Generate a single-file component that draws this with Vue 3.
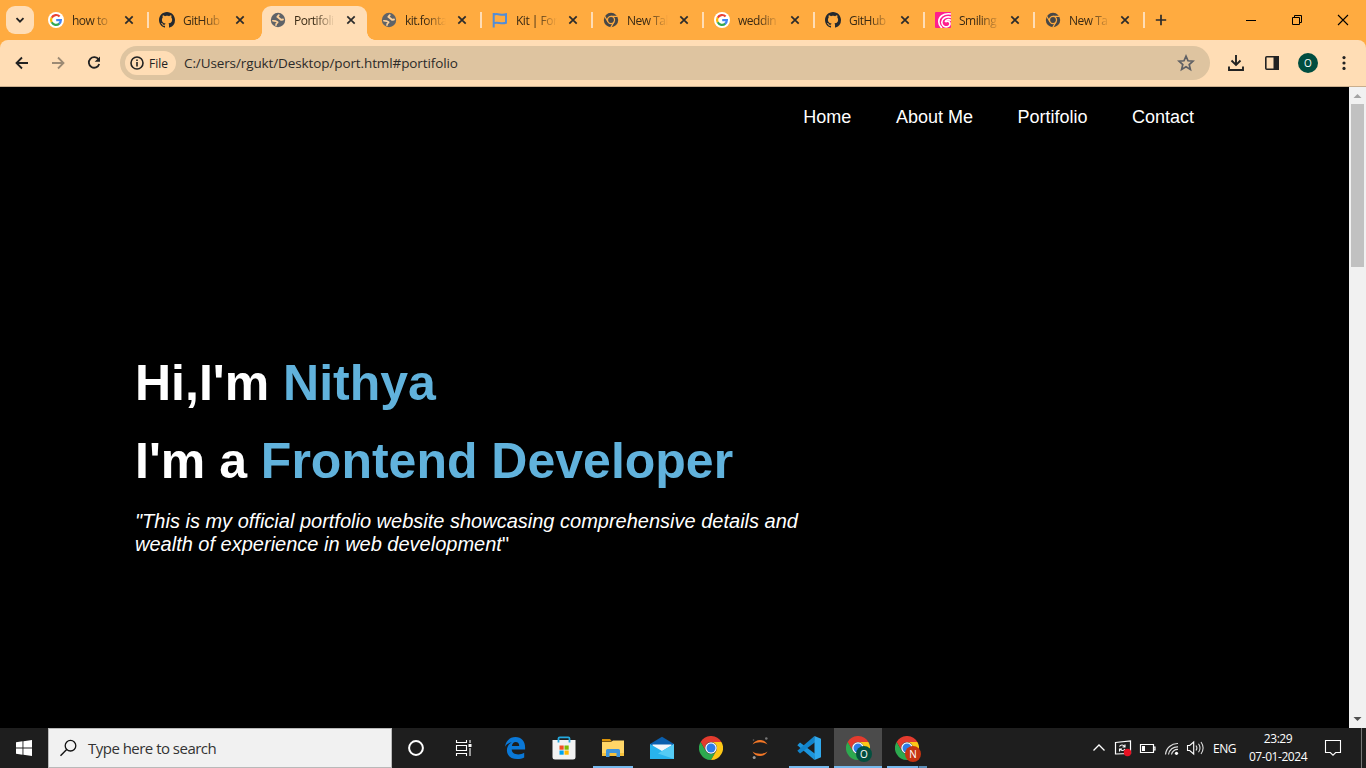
<script setup>
const tabs = [
  { title: 'how to', icon: 'google', sep: true },
  { title: 'GitHub', icon: 'github' },
  { title: 'Portifoli', icon: 'globe', active: true },
  { title: 'kit.fonta', icon: 'globe', sep: true },
  { title: 'Kit | For', icon: 'flag', sep: true },
  { title: 'New Tal', icon: 'chrome-gray', sep: true },
  { title: 'weddin', icon: 'google', sep: true },
  { title: 'GitHub', icon: 'github', sep: true, narrow: true },
  { title: 'Smiling', icon: 'swirl', sep: true, narrow: true },
  { title: 'New Ta', icon: 'chrome-gray', sep: true, narrow: true },
]
const links = ['Home', 'About Me', 'Portifolio', 'Contact']
const apps = [
  { icon: 'edge' },
  { icon: 'store' },
  { icon: 'explorer', open: true },
  { icon: 'mail' },
  { icon: 'chrome' },
  { icon: 'jupyter' },
  { icon: 'vscode', open: true },
  { icon: 'chrome', open: true, current: true, badge: 'O', tone: 'green' },
  { icon: 'chrome', open: true, stacked: true, badge: 'N', tone: 'red' },
]
</script>

<template>
  <div class="screen">
    <svg class="defs" aria-hidden="true">
      <symbol id="google" viewBox="0 0 16 16">
        <circle cx="8" cy="8" r="8" fill="#fff" />
        <g fill="none" stroke-width="2.2">
          <path d="M11.6 4.5A4.9 4.9 0 0 0 3.7 5.7" stroke="#ea4335" />
          <path d="M3.7 5.6a4.9 4.9 0 0 0 0 4.8" stroke="#fbbc05" />
          <path d="M3.7 10.3a4.9 4.9 0 0 0 7.6 1.3" stroke="#34a853" />
          <path d="M11.1 11.8A4.8 4.8 0 0 0 12.9 8.1H8.2" stroke="#4285f4" />
        </g>
      </symbol>
      <symbol id="github" viewBox="0 0 16 16">
        <path fill="#24292f" d="M8 0C3.58 0 0 3.58 0 8c0 3.54 2.29 6.53 5.47 7.59.4.07.55-.17.55-.38 0-.19-.01-.82-.01-1.49-2.01.37-2.53-.49-2.69-.94-.09-.23-.48-.94-.82-1.13-.28-.15-.68-.52-.01-.53.63-.01 1.08.58 1.23.82.72 1.21 1.87.87 2.33.66.07-.52.28-.87.51-1.07-1.78-.2-3.64-.89-3.64-3.95 0-.87.31-1.59.82-2.15-.08-.2-.36-1.02.08-2.12 0 0 .67-.21 2.2.82.64-.18 1.32-.27 2-.27s1.36.09 2 .27c1.53-1.04 2.2-.82 2.2-.82.44 1.1.16 1.92.08 2.12.51.56.82 1.27.82 2.15 0 3.07-1.87 3.75-3.65 3.95.29.25.54.73.54 1.48 0 1.07-.01 1.93-.01 2.2 0 .21.15.46.55.38A8 8 0 0 0 16 8c0-4.42-3.58-8-8-8z" />
      </symbol>
      <symbol id="globe" viewBox="0 0 16 16">
        <circle cx="8" cy="8" r="7.2" fill="#5f6368" />
        <g fill="none" stroke="#ffd29b" stroke-linecap="round" stroke-linejoin="round">
          <path d="M8.800 3.200L7.300 4.800l2.200 1.700 1.500 1.300 2-.3" stroke-width="1.800" />
          <path d="M2.800 8.700l3 .4 1.900 1.200-1.400 1.300-.3 1.500" stroke-width="1.600" />
        </g>
      </symbol>
      <symbol id="flag" viewBox="0 0 16 16">
        <path d="M1.700 1v14.500M1.700 2.600c4.500-2 6.800 1.600 12.300-.3v8.500c-5.500 2-7.800-1.600-12.300.4" fill="none" stroke="#528dd7" stroke-width="2" />
      </symbol>
      <symbol id="chrome-gray" viewBox="0 0 24 24">
        <circle cx="12" cy="12" r="10.800" fill="#474747" />
        <g fill="none" stroke="#ffab40" stroke-width="1.900">
          <circle cx="12" cy="12" r="5.300" />
          <path d="M12 6.700h10M7.400 14.700L2.300 6M16.600 14.700L11.500 23.500" />
        </g>
      </symbol>
      <symbol id="swirl" viewBox="0 0 16 16">
        <rect width="16" height="16" rx="1" fill="#ff1e8e" />
        <g fill="none" stroke="#fff" stroke-width="1.600">
          <path d="M16 2C8 .8 3.600 5.200 3.800 10c.1 2.500 1.200 4.500 3.200 6" />
          <path d="M16 5.200C10.500 4 6.600 6.800 6.800 10.500c.2 3.200 3 4.800 5.500 4.300 2.500-.5 3.300-3 2.200-4.600-1-1.400-3.300-1.300-3.800.1" />
          <path d="M16 8.300c-2.500-1.300-5.300-.6-5.800 1.700" />
        </g>
      </symbol>
      <symbol id="chrome" viewBox="0 0 24 24">
        <path fill="#e33b2e" d="M12 6H22.400A12 12 0 0 0 1.600 6L6.800 15A6 6 0 0 1 12 6z" />
        <path fill="#2da94f" d="M6.800 15L1.600 6A12 12 0 0 0 12 24L17.200 15A6 6 0 0 1 6.800 15z" />
        <path fill="#fdc716" d="M17.200 15L12 24A12 12 0 0 0 22.400 6H12A6 6 0 0 1 17.200 15z" />
        <circle cx="12" cy="12" r="5.800" fill="#fff" />
        <circle cx="12" cy="12" r="4.500" fill="#2d7de9" />
      </symbol>
      <symbol id="edge" viewBox="0 0 24 24">
        <path fill="#0a78d7" d="M2 10.700C2.900 5 6.900 1.100 12.500 1.100c6 0 9.600 4.300 9.600 10.300v2.200H8.700c.2 3.300 3 4.900 6.500 4.900 2.200 0 4.200-.6 6-1.700v4.600c-2 1.100-4.400 1.600-7 1.600-6.200 0-10.300-3.200-10.300-8.700 0-3.600 2-6.400 5-8-3.300.4-5.600 2.100-6.900 4.400zM8.900 9.900h7.300c0-2.500-1.200-3.900-3.500-3.900-2 0-3.400 1.400-3.800 3.900z" />
      </symbol>
      <symbol id="store" viewBox="0 0 24 24">
        <path d="M.5 4h23v17a2.500 2.500 0 0 1-2.500 2.500H3A2.500 2.500 0 0 1 .5 21z" fill="#f2f2f2" />
        <path d="M6.500 6.500v-4a1.200 1.200 0 0 1 1.200-1.200h8.600a1.200 1.200 0 0 1 1.200 1.200v4" fill="none" stroke="#23a9df" stroke-width="1.800" />
        <path d="M7.500 9.500h4.200v4.200H7.500z" fill="#f25022" /><path d="M12.500 9.500h4.200v4.200h-4.200z" fill="#7fba00" />
        <path d="M7.500 14.500h4.200v4.200H7.500z" fill="#00a4ef" /><path d="M12.500 14.500h4.200v4.200h-4.200z" fill="#ffb900" />
      </symbol>
      <symbol id="explorer" viewBox="0 0 24 24">
        <path d="M1 3h8l2 2.500H1z" fill="#d99208" />
        <path d="M1 6h9l2-1.500h11V20H1z" fill="#ffd667" />
        <path d="M1 17h22v3H1z" fill="#f5c13c" />
        <path d="M5 21v-6.500a1.500 1.500 0 0 1 1.500-1.500h11a1.500 1.500 0 0 1 1.500 1.500V21h-3.500v-4h-7v4z" fill="#3e95dc" />
      </symbol>
      <symbol id="mail" viewBox="0 0 24 24">
        <path d="M0 8L12 .8 24 8v3H0z" fill="#0a5fae" />
        <path d="M2.500 8.500h19v7h-19z" fill="#f3f7fb" />
        <path d="M0 8l12 7L24 8v15H0z" fill="#28b3ed" />
        <path d="M24 8v15L8 17.500z" fill="#55ccf5" />
      </symbol>
      <symbol id="jupyter" viewBox="0 0 24 24">
        <path d="M4.500 8.500C7.500 2.500 16.500 2.500 19.500 8.500 15.500 5.500 8.500 5.500 4.500 8.500zM4.500 15.500c3 6 12 6 15 0-4 3-11 3-15 0z" fill="#f37726" />
        <circle cx="18.300" cy="2.500" r="1.300" fill="#777" /><circle cx="6.200" cy="21.500" r="1.500" fill="#999" /><circle cx="5.500" cy="4" r=".8" fill="#666" />
      </symbol>
      <symbol id="vscode" viewBox="0 0 24 24">
        <path d="M17.500 24L.3 9.200 3 6.500 18 17.800z" fill="#1c95dc" />
        <path d="M17.500 0L.3 14.800l2.700 2.700L18 6.200z" fill="#1284cb" />
        <path d="M17.500 0L24 2.700v18.600L17.500 24z" fill="#30a9ed" />
      </symbol>
    </svg>

    <header class="strip">
      <button class="search-tabs">
        <svg width="10" height="10" viewBox="0 0 10 10"><path d="M1.500 3.200L5 6.700l3.500-3.500" fill="none" stroke="#222" stroke-width="1.800" /></svg>
      </button>
      <div class="tabs">
        <div v-for="(t, i) in tabs" :key="i" class="tab" :class="{ active: t.active, narrow: t.narrow, sep: t.sep }">
          <svg class="fav" width="16" height="16"><use :href="'#' + t.icon" /></svg>
          <span class="title">{{ t.title }}</span>
          <svg class="close" width="16" height="16" viewBox="0 0 16 16"><path d="M4.300 4.300l7.400 7.400M11.700 4.300l-7.400 7.400" stroke="#2b2b2b" stroke-width="1.700" /></svg>
        </div>
      </div>
      <svg class="plus" width="12" height="12" viewBox="0 0 12 12"><path d="M6 .8v10.400M.8 6h10.400" stroke="#2b2b2b" stroke-width="1.700" /></svg>
      <div class="window-buttons">
        <svg width="46" height="40" viewBox="0 0 46 40"><path d="M18 20.500h10" stroke="#000" /></svg>
        <svg width="46" height="40" viewBox="0 0 46 40"><path d="M18.500 17.500h7v7h-7zM20.500 17.500v-2h7v7h-2" fill="none" stroke="#000" /></svg>
        <svg width="46" height="40" viewBox="0 0 46 40"><path d="M18 15l10 10M28 15L18 25" stroke="#000" stroke-width="1.100" /></svg>
      </div>
    </header>

    <div class="toolbar-bg">
      <div class="toolbar">
        <svg class="tool" viewBox="0 0 36 36"><path d="M28 18H17M22 12.500L16.500 18l5.500 5.500" fill="none" stroke="#222" stroke-width="1.800" /></svg>
        <svg class="tool" viewBox="0 0 36 36"><path d="M16 18h11M22 12.500l5.500 5.500-5.500 5.500" fill="none" stroke="#9c8a74" stroke-width="1.800" /></svg>
        <svg class="tool" viewBox="0 0 36 36"><path d="M26.600 14.600A5.300 5.300 0 1 0 27.200 19" fill="none" stroke="#222" stroke-width="1.800" /><path d="M28 11.500v5.300h-5.300z" fill="#222" /></svg>
        <div class="address">
          <div class="chip">
            <svg width="14" height="14" viewBox="0 0 14 14"><circle cx="7" cy="7" r="6" fill="none" stroke="#222" stroke-width="1.600" /><path d="M7 6v4.500M7 3.500v1.600" stroke="#222" stroke-width="1.600" /></svg>
            <span>File</span>
          </div>
          <span class="url">C:/Users/rgukt/Desktop/port.html#portifolio</span>
          <svg class="star" width="18" height="18" viewBox="0 0 18 18"><path d="M9 2.200l2 4.600 5 .4-3.800 3.300 1.200 4.900L9 12.800l-4.400 2.600 1.200-4.900L2 7.200l5-.4z" fill="none" stroke="#5f6064" stroke-width="1.700" /></svg>
        </div>
        <div class="actions">
          <svg class="tool" viewBox="0 0 36 36"><path d="M18 10v9.500M13.500 15.500L18 20l4.500-4.500M11 21.500V25h14v-3.500" fill="none" stroke="#222" stroke-width="1.900" /></svg>
          <svg class="tool" viewBox="0 0 36 36"><rect x="11.800" y="11.800" width="12.400" height="12.400" rx="1" fill="none" stroke="#222" stroke-width="1.600" /><path d="M19.500 11H25v14h-5.500z" fill="#222" /></svg>
          <div class="avatar-slot"><span class="avatar">O</span></div>
          <svg class="tool" viewBox="0 0 36 36"><g fill="#222"><circle cx="18" cy="12.600" r="1.600" /><circle cx="18" cy="18" r="1.600" /><circle cx="18" cy="23.400" r="1.600" /></g></svg>
        </div>
      </div>
    </div>

    <main class="viewport">
      <div class="page">
        <nav><a v-for="l in links" :key="l">{{ l }}</a></nav>
        <section class="hero">
          <h1>Hi,I'm <b>Nithya</b></h1>
          <h1>I'm a <b>Frontend Developer</b></h1>
          <p><i>"This is my official portfolio website showcasing comprehensive details and<br>wealth of experience in web development</i>"</p>
        </section>
      </div>
      <div class="scrollbar">
        <svg width="17" height="17" viewBox="0 0 17 17"><path d="M4.500 11L8.500 7l4 4z" fill="#a3a3a3" /></svg>
        <div class="thumb"></div>
        <svg class="down" width="17" height="17" viewBox="0 0 17 17"><path d="M4.500 6l4 4 4-4z" fill="#505050" /></svg>
      </div>
    </main>

    <footer class="taskbar">
      <div class="start">
        <svg width="16" height="16" viewBox="0 0 16 16"><path fill="#fff" d="M0 2.200L6.500 1.300V7.500H0zM7.400 1.200L16 0v7.500H7.400zM0 8.400h6.500v6.300L0 13.800zM7.400 8.400H16V16l-8.600-1.200z" /></svg>
      </div>
      <div class="search">
        <svg width="18" height="18" viewBox="0 0 18 18"><circle cx="11.500" cy="6.700" r="5.300" fill="none" stroke="#111" stroke-width="1.300" /><path d="M7.700 10.500L1.500 16.700" stroke="#111" stroke-width="1.400" /></svg>
        <span>Type here to search</span>
      </div>
      <div class="sys"><svg width="18" height="18" viewBox="0 0 18 18"><circle cx="9" cy="9" r="6.900" fill="none" stroke="#fff" stroke-width="2" /></svg></div>
      <div class="sys"><svg width="18" height="18" viewBox="0 0 18 18"><path d="M1.500 1v2.500h10V1M1.500 17v-2.500h10V17M1.500 6.500h10v5h-10zM15 1v3M15 9v8" fill="none" stroke="#fff" stroke-width="1.100" /><path d="M13.500 5h3v3h-3z" fill="#fff" /></svg></div>
      <div class="apps">
        <div v-for="(a, i) in apps" :key="i" class="app" :class="{ open: a.open, current: a.current, stacked: a.stacked }">
          <svg width="24" height="24"><use :href="'#' + a.icon" /></svg>
          <span v-if="a.badge" class="badge" :class="a.tone">{{ a.badge }}</span>
        </div>
      </div>
      <div class="tray">
        <svg width="24" height="40" viewBox="0 0 24 40"><path d="M6.500 22.500L12 17l5.500 5.500" fill="none" stroke="#fff" stroke-width="1.300" /></svg>
        <svg width="24" height="40" viewBox="0 0 24 40"><path d="M4.500 14.500L19.500 13v12.500L4.500 26z" fill="none" stroke="#fff" stroke-width="1.200" /><path d="M8.500 18.500c1-2 4-2 5 0m.5-2v2.500h-2.500M14 21c-1 2-4 2-5 0m-.5 2.500V21H11" fill="none" stroke="#fff" stroke-width="1.100" /><circle cx="16.500" cy="24.500" r="3.700" fill="#e81123" /></svg>
        <svg width="25" height="40" viewBox="0 0 25 40"><path d="M5.500 16.500h13v8h-13zM18.500 19h1.500v3h-1.500" fill="none" stroke="#fff" stroke-width="1.200" /><path d="M7 18h3v5H7z" fill="#fff" /></svg>
        <svg width="24" height="40" viewBox="0 0 24 40"><g fill="none" stroke="#ddd" stroke-width="1.200"><path d="M5.500 26.500A12 12 0 0 1 18 15.500M8.500 26.500a9 9 0 0 1 9.500-7.700M11.500 26.500a6 6 0 0 1 6.500-5" /></g><circle cx="16.500" cy="25.300" r="1.600" fill="#fff" /></svg>
        <svg width="24" height="40" viewBox="0 0 24 40"><path d="M3.500 17.500h2.200l4-3.500v12l-4-3.500H3.500z" fill="none" stroke="#fff" stroke-width="1.100" /><path d="M12 17.500q1.800 2.500 0 5M14.500 15.700q3 4.300 0 8.600M17 14q4.200 6 0 12" fill="none" stroke="#ddd" stroke-width="1.100" /></svg>
        <span class="lang">ENG</span>
        <div class="clock"><span>23:29</span><span>07-01-2024</span></div>
        <svg class="note" width="18" height="18" viewBox="0 0 18 18"><path d="M1.500 1.500h15v12h-4.800L9 16.200l-2.700-2.700H1.500z" fill="none" stroke="#fff" stroke-width="1.100" /></svg>
        <div class="desktop"></div>
      </div>
    </footer>
  </div>
</template>

<style>
body { overflow: hidden; }
</style>

<style scoped>
.screen { width: 1366px; height: 768px; display: flex; flex-direction: column; overflow: hidden; background: #000; font-family: "Open Sans", "Noto Sans", sans-serif; }
.screen svg { display: block; flex: none; }
.screen .defs { position: absolute; width: 0; height: 0; }

.strip { height: 40px; display: flex; align-items: center; background: #ffab40; }
.search-tabs { width: 28px; height: 28px; margin-left: 6px; padding: 0; border: 0; border-radius: 9px; background: #ffddb5; display: flex; align-items: center; justify-content: center; }
.tabs { display: flex; height: 40px; margin-left: 3px; }
.tab { position: relative; box-sizing: border-box; width: 111px; height: 40px; padding: 0 11px; display: flex; align-items: center; }
.tab.narrow { width: 110px; }
.tab.sep::after { content: ""; position: absolute; right: -1px; top: 12px; width: 2px; height: 16px; background: #ffddb5; }
.fav, .title, .close { position: relative; }
.title { width: 41px; margin-left: 8px; padding-top: 2px; overflow: hidden; white-space: nowrap; font-size: 12px; line-height: 18px; color: #3a2a14; letter-spacing: -0.5px; -webkit-mask-image: linear-gradient(90deg, #000 50%, transparent 100%); mask-image: linear-gradient(90deg, #000 50%, transparent 100%); }
.close { margin-left: auto; }
.tab.active::before { content: ""; position: absolute; left: -5px; right: -5px; top: 6px; bottom: 0; background:
  radial-gradient(circle at 0 0, transparent 7.500px, #ffddb5 8px) left bottom / 8px 8px no-repeat,
  radial-gradient(circle at 100% 0, transparent 7.500px, #ffddb5 8px) right bottom / 8px 8px no-repeat; }
.tab.active::after { content: ""; position: absolute; left: 3px; right: 3px; top: 6px; bottom: 0; border-radius: 9px 9px 0 0; background: #ffddb5; }
.tab.active .fav, .tab.active .title, .tab.active .close { z-index: 1; }
.plus { margin-left: 11px; }
.window-buttons { display: flex; margin-left: auto; }

.toolbar-bg { height: 47px; background: #ffab40; }
.toolbar { box-sizing: border-box; height: 47px; display: flex; align-items: center; background: #ffddb5; border-bottom: 1px solid #c9ae8d; border-radius: 8px 8px 0 0; }
.tool { width: 36px; height: 36px; }
.address { box-sizing: border-box; width: 1090px; height: 34px; margin-left: 12px; padding: 0 15px 0 5px; border-radius: 17px; background: #dec4a0; display: flex; align-items: center; }
.chip { box-sizing: border-box; width: 51px; height: 24px; padding-left: 5px; border-radius: 12px; background: #ffddb5; display: flex; align-items: center; gap: 5px; font-size: 12px; font-weight: 500; color: #222; }
.url { margin-left: 8px; font-size: 13.500px; line-height: 20px; color: #2c2a28; letter-spacing: -0.11px; white-space: nowrap; }
.star { margin-left: auto; }
.actions { display: flex; margin-left: 8px; align-items: center; }
.avatar-slot { width: 36px; display: flex; justify-content: center; }
.avatar { width: 20px; height: 20px; border-radius: 50%; background: #004d40; color: #fff; font-size: 10px; line-height: 20px; text-align: center; }

.viewport { height: 641px; display: flex; background: #000; }
.page { width: 1349px; font-family: "Liberation Sans", Arial, sans-serif; color: #fff; }
nav { display: flex; gap: 44.500px; justify-content: flex-end; padding: 20px 155px 0 0; font-size: 18px; line-height: 21px; }
.hero { padding: 226px 0 0 135px; }
h1 { margin: 0; font-size: 50px; line-height: 58px; height: 78px; font-weight: 700; white-space: nowrap; }
h1 b { color: #61b2dc; }
p { margin: 0; font-size: 20px; line-height: 23px; white-space: nowrap; }
.scrollbar { width: 17px; display: flex; flex-direction: column; align-items: center; background: #f1f1f1; }
.thumb { width: 13px; height: 163px; background: #c1c1c1; }
.down { margin-top: auto; }

.taskbar { height: 40px; display: flex; background: #1e1e1e; color: #fff; }
.start, .sys { width: 48px; display: flex; align-items: center; justify-content: center; }
.search { box-sizing: border-box; width: 344px; border: 1px solid #b9b9b9; background: #f1f1f1; display: flex; align-items: center; padding-left: 10px; gap: 11px; color: #333; font-size: 15px; letter-spacing: -0.52px; }
.apps { display: flex; gap: 1px; margin-left: 3px; }
.app { position: relative; width: 48px; display: flex; align-items: center; justify-content: center; }
.app.open::after { content: ""; position: absolute; bottom: 0; left: 4px; right: 4px; height: 2px; background: #76b9ed; }
.app.current { background: #4b4b4b; }
.app.current::after { left: 0; right: 0; }
.app.stacked::after { background: linear-gradient(90deg, #76b9ed 31px, #33536b 31px, #33536b 32px, #5b8fb8 32px); }
.badge { position: absolute; left: 22px; top: 18px; width: 16px; height: 16px; border-radius: 50%; font-size: 10px; line-height: 16px; text-align: center; }
.green { background: #04503f; }
.red { background: #c53411; }
.tray { display: flex; align-items: center; margin-left: auto; height: 40px; font-size: 12px; }
.lang { width: 29px; margin-left: 5px; letter-spacing: -0.5px; }
.clock { width: 72px; display: flex; flex-direction: column; align-items: center; line-height: 18px; letter-spacing: -0.45px; }
.note { margin-left: 10px; }
.desktop { width: 4px; height: 40px; margin-left: 19px; border-left: 1px solid #777; }
</style>
